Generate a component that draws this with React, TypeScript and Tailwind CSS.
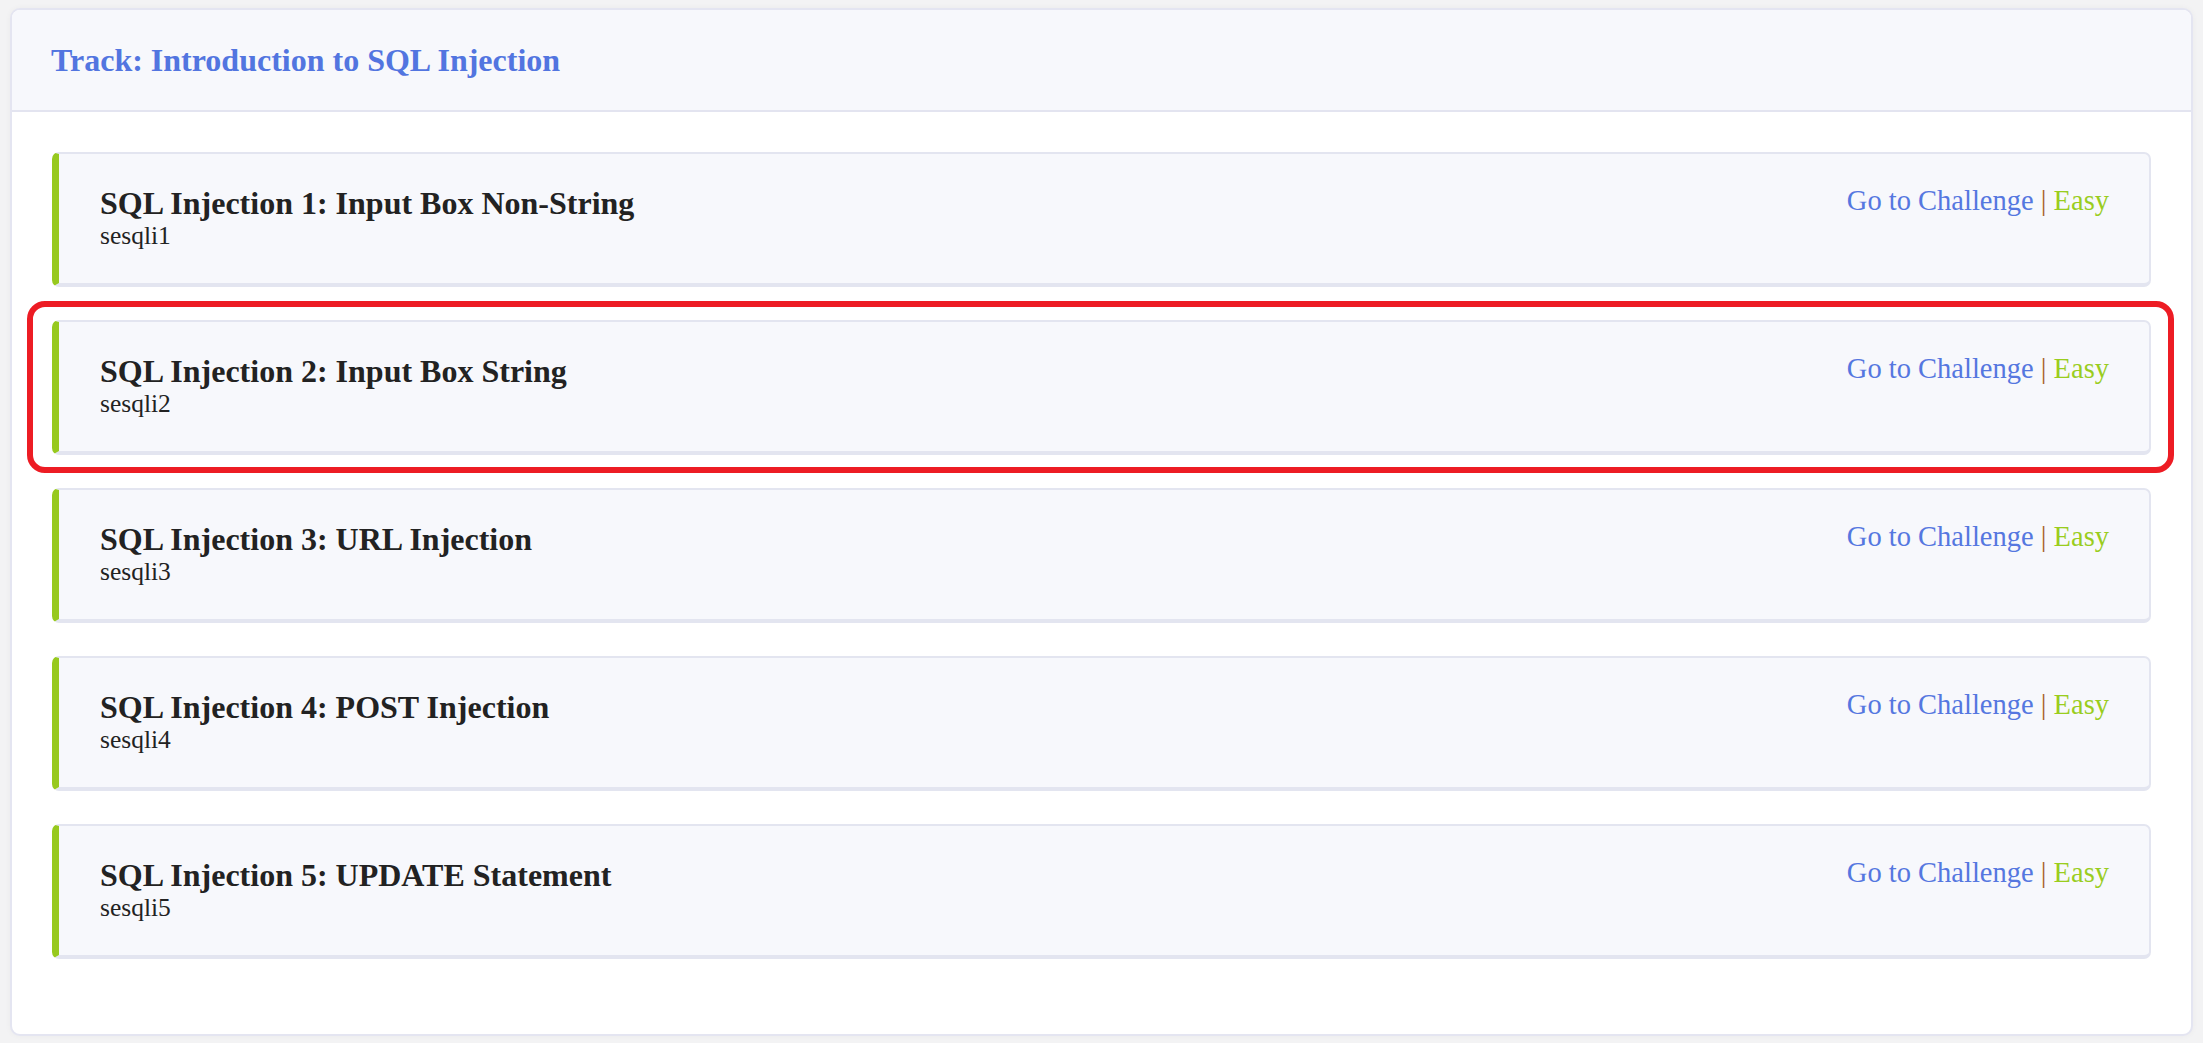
import React from 'react';

const challenges = [
  { title: 'SQL Injection 1: Input Box Non-String', code: 'sesqli1' },
  { title: 'SQL Injection 2: Input Box String', code: 'sesqli2' },
  { title: 'SQL Injection 3: URL Injection', code: 'sesqli3' },
  { title: 'SQL Injection 4: POST Injection', code: 'sesqli4' },
  { title: 'SQL Injection 5: UPDATE Statement', code: 'sesqli5' },
];

const App = () => {
  return (
    <div className="min-h-screen bg-[#f3f3f4] px-[10px] pt-[8px] pb-[6px] font-['Liberation_Serif',serif]">
      <div className="relative rounded-[10px] border-2 border-[#e4e5f1] bg-white overflow-hidden shadow-[0_0_6px_rgba(0,0,0,0.04)]">
        {/* Header */}
        <div className="h-[102px] flex items-center px-[39px] bg-[#f7f8fc] border-b-2 border-[#e3e4f0]">
          <h3 className="text-[32px] font-bold text-[#5275e0] leading-none">
            Track: Introduction to SQL Injection
          </h3>
        </div>

        {/* Challenge list */}
        <div className="px-[40px] pt-[40px] pb-[42px]">
          {challenges.map((c) => (
            <div
              key={c.code}
              className="mb-[33px] h-[135px] flex justify-between rounded-[7px] border-2 border-b-4 border-[#e3e5f0] border-l-[7px] border-l-[#97c91e] bg-[#f7f8fc] pl-[41px] pr-[40px] pt-[31px]"
            >
              <div>
                <h5 className="text-[32px] font-bold text-[#222] leading-[37px]">{c.title}</h5>
                <div className="text-[25.5px] text-[#222] leading-[27px]">{c.code}</div>
              </div>
              <div className="text-[28.5px] leading-[32px] whitespace-nowrap">
                <a href="#" className="text-[#5577e0]">Go to Challenge</a>
                <span className="text-[#a8622c]"> | </span>
                <span className="text-[#9acd1e]">Easy</span>
              </div>
            </div>
          ))}
        </div>
      </div>

      {/* Highlight annotation */}
      <div className="absolute left-[27px] top-[301px] w-[2147px] h-[172px] rounded-[18px] border-[6px] border-[#ed1c24] pointer-events-none" />
    </div>
  );
};

export default App;
